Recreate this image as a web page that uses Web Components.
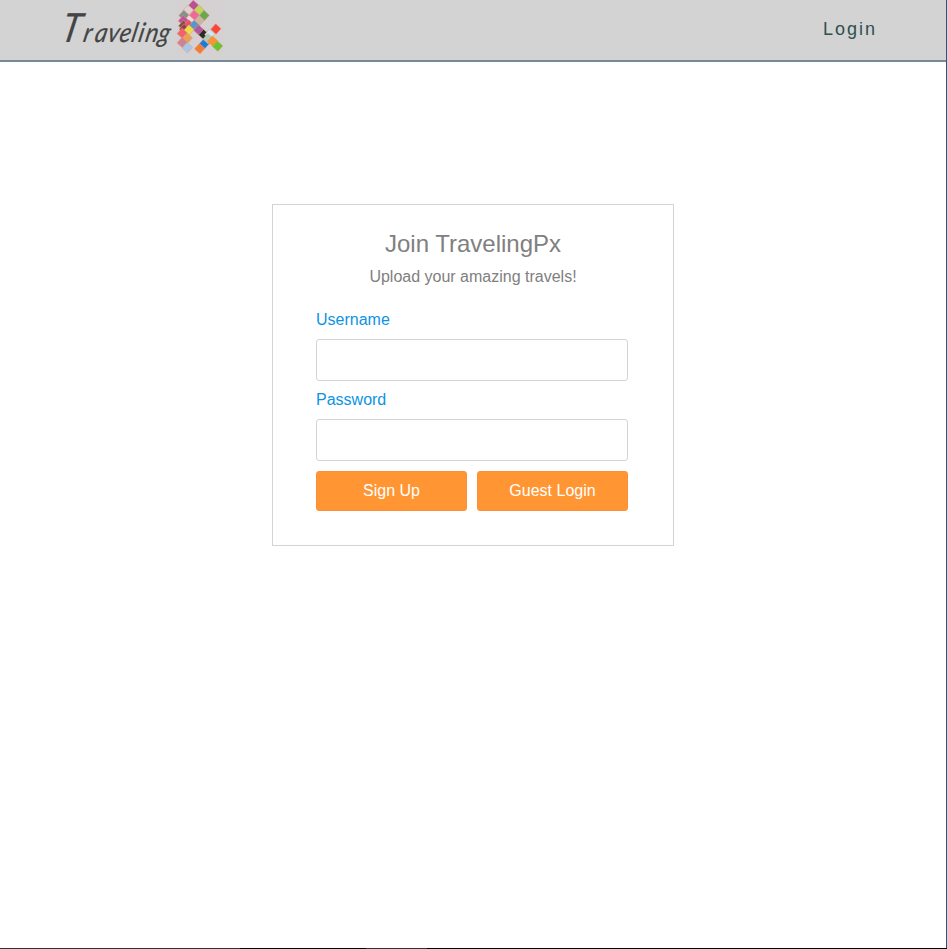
<!DOCTYPE html>
<html lang="en">
<head>
<meta charset="utf-8">
<title>TravelingPx</title>
<style>
html,body{margin:0;height:100%;overflow:hidden}
body{font-family:"Liberation Sans",Arial,sans-serif;font-size:16px;background:#fff}
</style>
</head>
<body>
<travel-app></travel-app>
<script>
const define = (name, html, init) => customElements.define(name, class extends HTMLElement {
  connectedCallback() {
    if (this.shadowRoot) return;
    this.attachShadow({mode: 'open'}).innerHTML = html;
    if (init) init(this, this.shadowRoot);
  }
});

// Tile mosaic of the logo: centre x, centre y, colour
const tiles = [
  [23.5,5.3,'#bd4f99'],[18.3,10.2,'#ddd2cf'],[29,10.2,'#bdd957'],[14,15.3,'#84918f'],
  [24.3,15.3,'#f0679b'],[34.2,15.5,'#68a950'],[19.3,20.3,'#e8dce0'],[29.3,20.5,'#c9b7a0'],
  [13.4,20.7,'#c45299'],[13.6,25.6,'#795447'],[19,25,'#ec4d68'],[24.3,25.3,'#5796cc'],
  [14.3,29,'#98403f'],[19,30,'#efdc45'],[28.7,30,'#b4559f'],[12.3,33.3,'#f0636d'],[17.3,38.2,'#eba154'],
  [33.8,34.6,'#282a2b'],[39.8,34.3,'#c9eaf0'],[45.9,29,'#fa4634'],[12.3,42.6,'#cf8295'],
  [17.3,47.6,'#a7c9e8'],[34.4,43.7,'#167de0'],[38,38.8,'#b6c7b5'],[42.6,41.2,'#fa942d'],
  [47.6,46.2,'#68c52d'],[29.7,48.7,'#f57b35']
];
define('travel-logo', `<style>:host{display:block;width:226px;height:60px}svg{display:block}</style>
<svg width="226" height="60" viewBox="0 0 226 60" role="img" aria-label="Traveling">
<rect x="175" width="49" height="54" fill="#d5d1d2"/>
<text y="42" transform="translate(8.5 0) skewX(-12) scale(.88 1)" font-family="Lato,sans-serif" font-style="italic" font-size="27" fill="#444" stroke="#444" stroke-width=".2" x="68 94 107 121.5 135 148.5 156.5 164.5 179"><tspan font-size="40">T</tspan>raveling</text>
<g class="tiles" transform="translate(170 0)" stroke="#dc9a80" stroke-opacity=".7" stroke-width=".7"></g></svg>`,
(el, root) => {
  root.querySelector('.tiles').innerHTML = tiles.map(([x, y, c]) =>
    `<rect x="-3.7" y="-3.7" width="7.4" height="7.4" rx=".5" fill="${c}" transform="translate(${x} ${y}) rotate(42)"/>`).join('');
});

define('site-header', `<style>
:host{display:flex;justify-content:space-between;box-sizing:border-box;height:62px;background:#d3d3d3;border-bottom:2px solid #778899}
a{color:#2f4f4f;font-size:18px;letter-spacing:2px;line-height:58px;padding-right:69px;text-decoration:none}
</style><travel-logo></travel-logo><a><slot></slot></a>`);

define('form-field', `<style>
:host{display:block;height:80px}
label{display:block;color:#0d93e2;line-height:20px;padding-bottom:9px}
input{display:block;box-sizing:border-box;width:100%;height:42px;border:1px solid #d3d3d3;border-radius:3px;background:#fff;padding:0 10px;font:inherit;outline:0}
</style><label for="i"><slot></slot></label><input id="i">`,
(el, root) => { root.querySelector('input').type = el.getAttribute('type') || 'text'; });

define('action-button', `<style>
:host{display:block;flex:1}
button{display:block;box-sizing:border-box;width:100%;height:40px;padding:0;border:1px solid #fb8f3c;border-radius:3px;background:#ff9633;color:#fff;font:inherit;line-height:38px}
</style><button><slot></slot></button>`);

define('signup-card', `<style>
:host{display:block;box-sizing:border-box;width:402px;height:342px;margin:142px 0 0 272px;border:1px solid #d3d3d3;padding:25px 45px 0 43px;background:#fff;color:#808080}
header{text-align:center;margin:0 -43px;width:400px}
h1{font-weight:400;font-size:24px;line-height:28px;margin:0}
p{margin:9px 0 23px;line-height:20px}
.row{display:flex;gap:10px;margin-top:1px}
</style>
<header><h1>Join TravelingPx</h1><p>Upload your amazing travels!</p></header>
<form-field>Username</form-field><form-field type="password">Password</form-field>
<div class="row"><action-button>Sign Up</action-button><action-button>Guest Login</action-button></div>`);

define('travel-app', `<style>
:host{display:grid;grid-template:1fr 1px / 1fr 1px;height:949px}
main{min-width:0}
.edge{background:#1c5b85}
.base{grid-column:1 / -1;background:linear-gradient(90deg,#353132 240px,#000 240px 366px,#353132 366px 427px,#000 427px)}
</style>
<main><site-header>Login</site-header><signup-card></signup-card></main><div class="edge"></div><div class="base"></div>`);
</script>
</body>
</html>
